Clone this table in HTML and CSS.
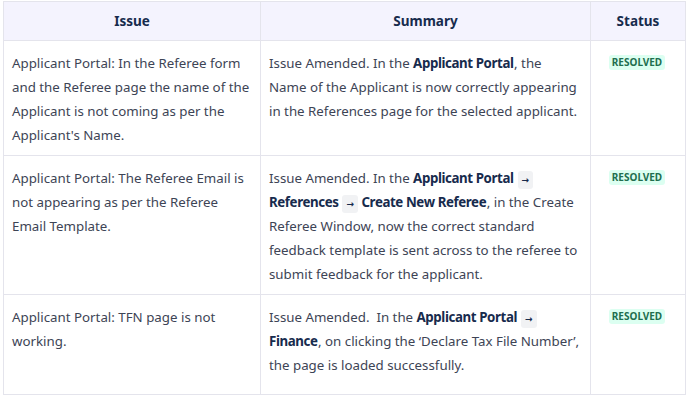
FILE: index.html
```html
<!DOCTYPE html>
<html>
<head>
<meta charset="utf-8">
<link rel="stylesheet" href="styles.css">
</head>
<body>
<table class="issues">
  <colgroup>
    <col class="c-issue">
    <col class="c-summary">
    <col class="c-status">
  </colgroup>
  <thead>
    <tr><th>Issue</th><th>Summary</th><th>Status</th></tr>
  </thead>
  <tbody>
    <tr>
      <td>Applicant Portal: In the Referee form and the Referee page the name of the Applicant is not coming as per the Applicant's Name.</td>
      <td class="summary">Issue Amended. In the <b>Applicant Portal</b>, the Name&nbsp;of the Applicant is now correctly appearing in&nbsp;the References page for the selected applicant.</td>
      <td class="status"><span class="lozenge">Resolved</span></td>
    </tr>
    <tr>
      <td>Applicant Portal: The Referee Email is not appearing as per the Referee Email Template.</td>
      <td class="summary">Issue Amended. In the <b>Applicant Portal</b> <span class="arrow">→</span> <b>References</b> <span class="arrow">→</span> <b>Create New Referee</b>, in the Create Referee Window, now the correct standard feedback template is sent across to the referee to submit feedback for the applicant.</td>
      <td class="status"><span class="lozenge">Resolved</span></td>
    </tr>
    <tr class="last">
      <td>Applicant Portal: TFN page is not working.</td>
      <td class="summary">Issue Amended.&nbsp; In the <b>Applicant Portal</b> <span class="arrow">→</span> <b>Finance</b>, on clicking the ‘Declare Tax File Number’, the page is loaded successfully.</td>
      <td class="status"><span class="lozenge">Resolved</span></td>
    </tr>
  </tbody>
</table>
</body>
</html>
```

FILE: styles.css
```css
html, body {
  margin: 0;
  padding: 0;
  background: #ffffff;
}
body {
  padding: 1px 3px 0 3px;
  font-family: "Noto Sans", "Open Sans", sans-serif;
  font-size: 13.3px;
  color: #3d4455;
}
.issues {
  border-collapse: collapse;
  table-layout: fixed;
  width: 682px;
}
.c-issue { width: 257px; }
.c-summary { width: 330px; }
.c-status { width: 95px; }
.issues th, .issues td {
  border: 1px solid #e4e4ec;
  vertical-align: top;
  text-align: left;
  line-height: 24px;
}
.issues th {
  background: #f4f3fe;
  color: #172b4d;
  font-weight: 700;
  font-size: 13.5px;
  text-align: center;
  height: 38px;
  padding: 0 8px;
  vertical-align: middle;
  line-height: 20px;
}
.issues td {
  padding: 10px 10px 8px 8px;
}
.issues td.summary {
  padding-right: 2px;
}
.issues tr.last td {
  padding-bottom: 17px;
}
.issues b {
  color: #172b4d;
  font-weight: 700;
  letter-spacing: -0.4px;
  padding-right: 0.5px;
}
.arrow {
  display: inline-block;
  background: #f1f2f4;
  color: #172b4d;
  font-family: "DejaVu Sans", sans-serif;
  font-size: 9px;
  font-weight: 700;
  line-height: 18px;
  padding: 0 4px;
  border-radius: 3px;
  vertical-align: 0;
}
.issues td.status {
  text-align: center;
  padding-top: 14px;
}
.lozenge {
  display: inline-block;
  background: #dcfff1;
  color: #216e4e;
  font-size: 10px;
  font-weight: 700;
  line-height: 15px;
  padding: 0 3px;
  border-radius: 3px;
  text-transform: uppercase;
  vertical-align: top;
}
```
